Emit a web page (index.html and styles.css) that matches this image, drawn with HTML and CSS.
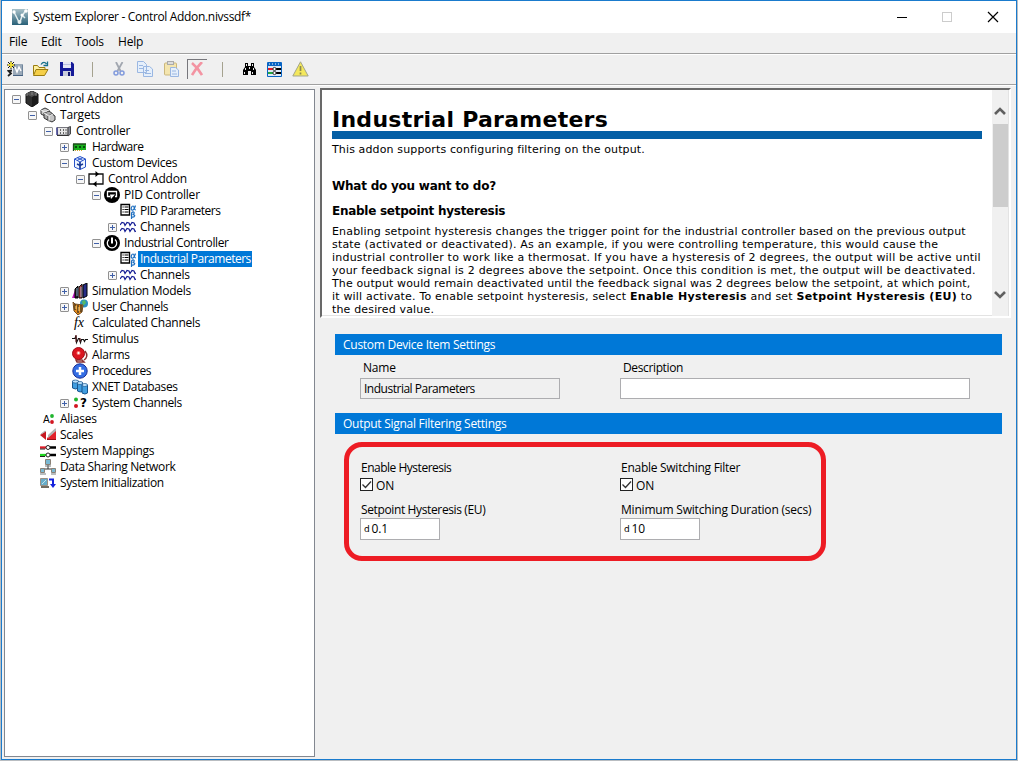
FILE: index.html
```html
<!DOCTYPE html>
<html lang="en">
<head>
<meta charset="utf-8">
<title>System Explorer - Control Addon.nivssdf*</title>
<link rel="stylesheet" href="styles.css">
</head>
<body>
<svg class="defs" width="0" height="0">
  <symbol id="params" viewBox="0 0 16 16"><path d="M1 1.500h8.500v10.500h-8.500z" fill="#fff" stroke="#000" stroke-width="1.300"/><path d="M2.500 4h1.200M4.500 4h4M2.500 6.500h1.200M4.500 6.500h4M2.500 9h1.200M4.500 9h4" stroke="#000"/><path d="M15.500 2.500C14 7 13 7.500 11.800 7C10.500 6 11.500 3 13 3C14.500 3 14 7 15.800 7M11.500 16V11C11.500 8 15 8.500 14 10.500C13.500 11.500 12.500 11.500 12.500 11.500C16 11.500 15 14.500 12 14" fill="none" stroke="#1e6fc0" stroke-width="1.200"/></symbol>
  <symbol id="waves" viewBox="0 0 16 16"><path d="M0 6L2 3.500L4 4L5 6.500L7 3.500L9 4L10 6.500L12 3.500L14 4L15 6.500L16 6M0 12L2 9.500L4 10L5 12.500L7 9.500L9 10L10 12.500L12 9.500L14 10L15 12.500L16 12" fill="none" stroke="#141c94" stroke-width="1.200"/></symbol>
</svg>
<div class="window">
  <header class="titlebar">
    <svg class="app" width="16" height="16"><defs><linearGradient id="ag" x2="0" y2="1"><stop stop-color="#a8c0c8"/><stop offset="1" stop-color="#286078"/></linearGradient></defs><rect width="16" height="16" fill="url(#ag)"/><path d="M2 3L7 13M8 13L10 7L14 1M10 6L13 9" stroke="#e4eef0" stroke-width="1.500" fill="none"/><circle cx="2" cy="3" r="1.700" fill="#fff"/><circle cx="7.500" cy="13" r="2" fill="#e8f0f0"/><circle cx="10" cy="6" r="1.500" fill="#fff"/><circle cx="14" cy="2" r="1.800" fill="#fff"/></svg>
    <span class="title">System Explorer - Control Addon.nivssdf*</span>
    <svg class="controls" width="102" height="12" shape-rendering="crispEdges"><path d="M0 6.500h10" stroke="#000"/><rect x="45.500" y="1.500" width="9" height="9" fill="none" stroke="#ccc"/><path d="M91 1l10 10M101 1L91 11" stroke="#000" stroke-width="1.200" shape-rendering="auto"/></svg>
  </header>
  <nav class="menu"><span class="m1">File</span><span class="m2">Edit</span><span class="m3">Tools</span><span class="m4">Help</span></nav>
  <div class="toolbar">
    <svg width="16" height="16"><rect x="6" y="3" width="10" height="11" fill="#9aa9b8"/><path d="M8 6l2 5 2-5 2 4" stroke="#fff" stroke-width="1.500" fill="none"/><path d="M6 14.500h10V4" fill="none" stroke="#456080"/><path d="M4 0v8M0 4h8M1 1l6 6M7 1L1 7" stroke="#111"/><path d="M4 1v6M1 4h6" stroke="#ffeb30" stroke-width="1.500"/><path d="M5 9.500L1.500 10L4 12.500L1 15" fill="none" stroke="#222" stroke-width="1.800"/></svg>
    <svg width="17" height="16"><path d="M1.500 13.500V4.500h4l1.500 2h6v3" fill="#fff1a0" stroke="#9a7c10"/><path d="M1.500 14.500L4 8.500h12L12.500 14.500z" fill="#f5cf48" stroke="#9a7c10"/><path d="M9 3.500C11 .5 13 1 14.500 3M15.500 .5v4h-4" fill="none" stroke="#17718c" stroke-width="1.300"/></svg>
    <svg width="14" height="14"><path d="M0 0h12l2 2v12H0z" fill="#151a98"/><path d="M3 0h8v6H3z" fill="#e6e8f4"/><path d="M3 2.500h8" stroke="#b9bfe0"/><path d="M3 9h8v5H3z" fill="#c8ccdc"/><path d="M8 10h2v4H8z" fill="#10146c"/></svg>
    <i class="sep"></i>
    <svg width="12" height="14"><path d="M3 0l4.500 9M9.500 0L4.500 9" stroke="#a2a7b0" stroke-width="1.800"/><circle cx="3" cy="11" r="2" fill="none" stroke="#829bdc" stroke-width="1.500"/><circle cx="9" cy="11" r="2" fill="none" stroke="#829bdc" stroke-width="1.500"/></svg>
    <svg width="17" height="16"><g fill="#e5effb" stroke="#9ab7e2"><path d="M.5 .5h6l3 3v8h-9zM6.500 5.500h6l3 2.500v7.500H6.500z"/><path d="M2 4.500h4M2 7.500h4M8 9.500h4M8 12.500h6"/></g></svg>
    <svg width="16" height="16"><rect x=".5" y="2" width="12" height="12" rx="1" fill="#f4e5ae" stroke="#cbb77c"/><rect x="3.500" y=".5" width="6" height="3" fill="#ddd" stroke="#aaa"/><path d="M6.500 6.500h5l3 2.500v6.500h-8z" fill="#e5effb" stroke="#9ab7e2"/><path d="M8 10h4M8 13h5" stroke="#9ab7e2"/></svg>
    <span class="pressed"><svg width="12" height="14"><path d="M1 1Q7 6 11 13M11 0Q5 6 1 13" fill="none" stroke="#f394a2" stroke-width="2.600"/></svg></span>
    <i class="sep"></i>
    <svg width="15" height="14"><path d="M3 1h3v3h3V1h3v4l2 3v5H9V9H6v4H1V8l2-3z" fill="#000"/><path d="M4.500 2v2M10.500 2v2M3.500 6v2M11.500 6v2M2.500 10v2M10.500 10v2M7.500 5v2" stroke="#e8e8e8"/></svg>
    <svg width="15" height="15"><rect width="15" height="15" rx="1" fill="#0864c4"/><path d="M1 4h13v10H1z" fill="#dfe9f5"/><path d="M2 2h1M5 2h1M8 2h1M11 2h1" stroke="#fff"/><path d="M1 7h5" stroke="#e21b28" stroke-width="2"/><path d="M9 7h5M9 11h5" stroke="#000" stroke-width="2"/><path d="M1 11h5" stroke="#26a940" stroke-width="2"/><circle cx="7.500" cy="7" r="1.600" fill="#fff" stroke="#333"/><circle cx="7.500" cy="11" r="1.600" fill="#fff" stroke="#333"/></svg>
    <svg width="17" height="16"><path d="M8.500 .8L16.200 15H.8z" fill="#f4e85c" stroke="#a3a58b" stroke-linejoin="round"/><path d="M8.500 5v5M8.500 11.500v2" stroke="#8c8a50" stroke-width="1.700"/></svg>
  </div>
  <main class="workspace">
    <div class="tree">
      <div class="row"><i class="ex minus"></i><svg width="16" height="16"><path d="M8 0l6 3v9l-6 4-6-4V3z" fill="#303030" stroke="#111"/><path d="M2 3l6 3 6-3-6-3z" fill="#555"/><path d="M8 6v10l6-4V3z" fill="#1c1c1c"/><path d="M3 2v3M8 1v3M12 2v3" stroke="#888"/></svg><span>Control Addon</span></div>
      <div class="row l1"><i class="ex minus"></i><svg width="16" height="16"><g stroke="#333" fill="#ccc"><path d="M1 3l4-2 4 2v4L5 9 1 7z"/><path d="M4 6l5-2 4 3v5l-4 2-5-3z" fill="#aaa"/><path d="M8 9l4-2 3 2v4l-3 2-4-2z" fill="#c4c4c4"/></g><path d="M1 3l4 2 4-2M4 6l5 3 4-2M9 9v5" stroke="#f2f2f2" fill="none"/></svg><span>Targets</span></div>
      <div class="row l2"><i class="ex minus"></i><svg width="16" height="16"><path d="M1 4.500h11v7.500H1.500z" fill="#e6e6e6" stroke="#77777f"/><path d="M12 4.500l2.500-1v7.500L12 13z" fill="#888a96" stroke="#444"/><path d="M1 4.500v7.500" stroke="#2b2e88" stroke-width="1.300"/><path d="M4.500 6v5M7.500 6v5M10 6v5" stroke="#666" stroke-dasharray="2 1"/><path d="M1 12.500h11" stroke="#333"/></svg><span>Controller</span></div>
      <div class="row l3"><i class="ex plus"></i><svg width="16" height="16"><path d="M1 5h13v6H2z" fill="#18b01c"/><path d="M1 5h13M1.500 5v7" stroke="#1d4c1b" stroke-width="1.300"/><path d="M3 7h2v2H3zM7 7h2v2H7zM11 7h2v2h-2z" fill="#064c0c"/><path d="M3 11.500h8" stroke="#d3a632" stroke-dasharray="1 1"/></svg><span class="k3">Hardware</span></div>
      <div class="row l3"><i class="ex minus"></i><svg width="16" height="16"><path d="M8 1.500l5.500 2.500v8L8 14.500l-5.500-2.500V4z" fill="#eef5ff" stroke="#2853c9"/><path d="M2.500 4L8 7l5.500-3M8 7v8M5 2.500l6 3M11 2.500L5 5.500" fill="none" stroke="#2853c9"/><path d="M8 7v7M5 9l3 1.500 3-1.500" fill="none" stroke="#173994" stroke-width="1.500"/></svg><span class="k1">Custom Devices</span></div>
      <div class="row l4"><i class="ex minus"></i><svg width="16" height="16"><path d="M1 3h14v10H1z" fill="#fff" stroke="#111" stroke-width="1.300"/><path d="M7.500 0L11 3 7.500 6zM8.500 10L5 13l3.500 3z"/></svg><span>Control Addon</span></div>
      <div class="row l5"><i class="ex minus"></i><svg width="16" height="16"><circle cx="8" cy="8" r="8"/><path d="M6 9.500H3.500v-5h9v5H11" fill="none" stroke="#fff" stroke-width="1.300"/><path d="M6 7.500h5L7 12z" fill="#fff"/></svg><span>PID Controller</span></div>
      <div class="row l6"><i class="ex"></i><svg width="16" height="16"><use href="#params"/></svg><span class="k3">PID Parameters</span></div>
      <div class="row l6"><i class="ex plus"></i><svg width="16" height="16"><use href="#waves"/></svg><span class="k1">Channels</span></div>
      <div class="row l5"><i class="ex minus"></i><svg width="16" height="16"><circle cx="8" cy="8" r="8"/><path d="M5 4.500A4.700 4.700 0 1 0 11 4.500" fill="none" stroke="#fff" stroke-width="1.300"/><path d="M8 2.500v6" stroke="#fff" stroke-width="2"/></svg><span class="k2">Industrial Controller</span></div>
      <div class="row l6"><i class="ex"></i><svg width="16" height="16"><use href="#params"/></svg><span class="selected k3">Industrial Parameters</span></div>
      <div class="row l6"><i class="ex plus"></i><svg width="16" height="16"><use href="#waves"/></svg><span class="k1">Channels</span></div>
      <div class="row l3"><i class="ex plus"></i><svg width="16" height="16"><path d="M0 15L3 7v8z" fill="#c318c5"/><path d="M3 6l3-3v12H3z" fill="#202328" stroke="#000"/><path d="M7 4l3-3v14H7z" fill="#c53e38" stroke="#111"/><path d="M11 2l4-2v13l-4 2z" fill="#262d87" stroke="#000"/><path d="M9 4v10M5 5v8" stroke="#84a4c8"/></svg><span class="k1">Simulation Models</span></div>
      <div class="row l3"><i class="ex plus"></i><svg width="16" height="16"><circle cx="12" cy="4.500" r="4" fill="#2a8fc2"/><path d="M10 2l3-1 1 3-3 3z" fill="#55b866"/><path d="M1 3l2 2 8 1-1 7-4 3-4-4z" fill="#e58b1c" stroke="#704c24"/><path d="M3 5v6M6 6v8M9 6v7" stroke="#39301f" stroke-width="1.300"/><path d="M4 7v3M7 8v4" stroke="#ffd276"/></svg><span class="k2">User Channels</span></div>
      <div class="row l3"><i class="ex"></i><svg width="16" height="16"><text x="2" y="12" class="fx">fx</text></svg><span class="k1">Calculated Channels</span></div>
      <div class="row l3"><i class="ex"></i><svg width="16" height="16"><path d="M0 7.500h3l1-3 .5 7 2-4 1 0 1 4 1-3h2l1 2 1-2h2.500" fill="none" stroke="#111" stroke-width="1.200"/><path d="M4 4v7M8 7v4" stroke="#702024"/></svg><span>Stimulus</span></div>
      <div class="row l3"><i class="ex"></i><svg width="16" height="16"><path d="M13 4c3 4 2 7-1 9M4 13h6l2 2H5z" fill="none" stroke="#8b3232" stroke-width="1.500"/><circle cx="6.500" cy="6.500" r="6" fill="#db1520" stroke="#a00b15"/><circle cx="6.500" cy="6" r="2" fill="#ff7c75"/><circle cx="6.500" cy="6" r="1" fill="#fff"/></svg><span>Alarms</span></div>
      <div class="row l3"><i class="ex"></i><svg width="16" height="16"><circle cx="8" cy="8" r="7.200" fill="#346ee3" stroke="#182d95"/><path d="M8 4v8M4 8h8" stroke="#fff" stroke-width="2.500"/></svg><span class="k3">Procedures</span></div>
      <div class="row l3"><i class="ex"></i><svg width="16" height="16"><g fill="#419ee0" stroke="#17558e"><path d="M.5 2v7q3 2 6 0V2z"/><path d="M5.500 4v8q3 2 5 0V4z"/><path d="M10 6v8q3 2 5.500 0V6z"/></g><g fill="#bfe4ff" stroke="#17558e" stroke-width=".7"><ellipse cx="3.500" cy="2.500" rx="3" ry="1.500"/><ellipse cx="8" cy="4" rx="2.800" ry="1.500"/><ellipse cx="12.800" cy="6" rx="2.700" ry="1.500"/></g></svg><span class="k2">XNET Databases</span></div>
      <div class="row l3"><i class="ex plus"></i><svg width="16" height="16"><circle cx="4" cy="4.500" r="2" fill="#20b52e"/><circle cx="4" cy="11" r="2" fill="#d21520"/><text x="8" y="12" class="q">?</text></svg><span class="k2">System Channels</span></div>
      <div class="row l1"><i class="ex"></i><svg width="16" height="16"><text x="3" y="12" class="a">A</text><circle cx="12" cy="5" r="1.900" fill="#20b52e"/><circle cx="12" cy="11" r="1.900" fill="#d21520"/></svg><span class="k1">Aliases</span></div>
      <div class="row l1"><i class="ex"></i><svg width="16" height="16"><path d="M0 8l6-4v9z" fill="#c71920"/><path d="M7 11l9-8v10H7z" fill="#e3222b"/><path d="M1 6.500l4-3 1 1-5 3zM8 8l7-6.500h1V4l-8 7z" fill="#b4b4b4"/><path d="M7 12.500h9" stroke="#9d0c14"/></svg><span class="k1">Scales</span></div>
      <div class="row l1"><i class="ex"></i><svg width="16" height="16"><path d="M0 4.500h6" stroke="#e01b27" stroke-width="2.300"/><path d="M0 12h6" stroke="#20d620" stroke-width="2.300"/><path d="M10 4.500h6M10 12h6" stroke="#000" stroke-width="2.300"/><path d="M0 6h5M0 13.500h5" stroke="#222"/><circle cx="8" cy="4.500" r="2" fill="#fff" stroke="#222"/><circle cx="8" cy="12" r="2" fill="#fff" stroke="#222"/></svg><span class="k1">System Mappings</span></div>
      <div class="row l1"><i class="ex"></i><svg width="16" height="16"><path d="M8 6v4H3v2M8 10h5v2" fill="none" stroke="#333"/><g fill="#79b9d4" stroke="#8a8176"><path d="M5.500 .5h5v5h-5zM.5 9.500h4v4h-4zM11.500 9.500h4v4h-4z"/></g><path d="M5 7h6M0 15h6M11 15h5" stroke="#747c80"/></svg><span class="k2">Data Sharing Network</span></div>
      <div class="row l1"><i class="ex"></i><svg width="16" height="16"><path d="M.5 3.500h7v7h-7z" fill="#67acc9" stroke="#9b9185"/><path d="M2 9l4-4" stroke="#c4e4ec"/><path d="M1 12h8" stroke="#726b60" stroke-width="2"/><path d="M9 4.500h4v6" fill="none" stroke="#1522dd" stroke-width="2"/><path d="M10 9h6l-3 4z" fill="#1522dd"/></svg><span class="k2">System Initialization</span></div>
    </div>
    <section class="content">
      <div class="help">
        <div class="doc">
          <h1>Industrial Parameters</h1>
          <p class="intro">This addon supports configuring filtering on the output.</p>
          <h2>What do you want to do?</h2>
          <h3>Enable setpoint hysteresis</h3>
          <p class="body">
            <span class="w2">Enabling setpoint hysteresis changes the trigger point for the industrial controller based on the previous output</span>
            <span class="w3">state (activated or deactivated). As an example, if you were controlling temperature, this would cause the</span>
            <span class="w4">industrial controller to work like a thermosat. If you have a hysteresis of 2 degrees, the output will be active until</span>
            <span class="w4">your feedback signal is 2 degrees above the setpoint. Once this condition is met, the output will be deactivated.</span>
            <span class="w1">The output would remain deactivated until the feedback signal was 2 degrees below the setpoint, at which point,</span>
            <span class="w3">it will activate. To enable setpoint hysteresis, select <b>Enable Hysteresis</b> and set <b>Setpoint Hysteresis (EU)</b> to</span>
            <span class="w2">the desired value.</span>
          </p>
        </div>
        <div class="scroll"><svg width="16" height="34"><path d="M3 24l5-5 5 5" fill="none" stroke="#606060" stroke-width="2.600"/></svg><i class="thumb"></i><svg class="down" width="16" height="34"><path d="M3 10l5 5 5-5" fill="none" stroke="#606060" stroke-width="2.600"/></svg></div>
      </div>
      <div class="bar">Custom Device Item Settings</div>
      <div class="fields">
        <label><span>Name</span><div class="input disabled k3">Industrial Parameters</div></label>
        <label><span class="k2">Description</span><div class="input wide"></div></label>
      </div>
      <div class="bar">Output Signal Filtering Settings</div>
      <div class="callout">
        <div class="group">
          <div class="lab k3">Enable Hysteresis</div>
          <div class="check"><svg width="13" height="13"><rect x=".5" y=".5" width="12" height="12" fill="#fff" stroke="#222"/><path d="M2.500 6.500l3 3 5.500-6" fill="none" stroke="#333" stroke-width="1.300"/></svg><span>ON</span></div>
          <div class="lab k2">Setpoint Hysteresis (EU)</div>
          <div class="num"><small>d</small><span>0.1</span></div>
        </div>
        <div class="group">
          <div class="lab k1">Enable Switching Filter</div>
          <div class="check"><svg width="13" height="13"><rect x=".5" y=".5" width="12" height="12" fill="#fff" stroke="#222"/><path d="M2.500 6.500l3 3 5.500-6" fill="none" stroke="#333" stroke-width="1.300"/></svg><span>ON</span></div>
          <div class="lab">Minimum Switching Duration (secs)</div>
          <div class="num"><small>d</small><span>10</span></div>
        </div>
      </div>
    </section>
  </main>
</div>
</body>
</html>
```
FILE: styles.css
```css
* { box-sizing: border-box; }
body { margin: 0; width: 1018px; height: 761px; overflow: hidden; background: #b9bdc1; font: 12px/16px "Open Sans", sans-serif; letter-spacing: -0.2px; color: #000; white-space: nowrap; }
svg { flex: none; display: block; }
.defs { position: absolute; }
.k1 { letter-spacing: -0.27px; }
.k2 { letter-spacing: -0.37px; }
.k3 { letter-spacing: -0.49px; }
.window { width: 1016px; height: 760px; margin-left: 1px; border: 1px solid #1a7bcd; background: #f0f0f0; display: flex; flex-direction: column; }
.titlebar { height: 32px; flex: none; background: #fff; display: flex; align-items: center; padding: 0 17px 0 10px; }
.title { margin-left: 5px; flex: 1; letter-spacing: -0.33px; }
.menu { height: 22px; flex: none; display: flex; padding: 1px 0 0 7px; border-bottom: 1px solid #fff; box-shadow: inset 0 -1px #a0a0a0; }
.m1 { width: 32px; } .m2 { width: 34px; } .m3 { width: 43px; }
.toolbar { height: 31px; flex: none; display: flex; align-items: center; padding: 0 0 2px 5px; border-bottom: 1px solid #fff; box-shadow: inset 0 -1px #a0a0a0; }
.toolbar > svg:nth-child(2) { margin-left: 9px; }
.toolbar > svg:nth-child(3) { margin-left: 11px; }
.sep { width: 1px; height: 15px; background: #a5a28f; margin-left: 18px; }
.toolbar > svg:nth-child(5) { margin-left: 20px; }
.toolbar > svg:nth-child(6) { margin-left: 12px; }
.toolbar > svg:nth-child(7) { margin-left: 10px; }
.pressed { width: 20px; height: 20px; margin-left: 7px; padding: 2px 0 0 3px; border: solid #77777c; border-width: 1px 0 0 1px; }
.pressed + .sep { margin-left: 15px; }
.toolbar > svg:nth-child(10) { margin-left: 19px; }
.toolbar > svg:nth-child(11) { margin-left: 10px; }
.toolbar > svg:nth-child(12) { margin-left: 10px; }
.workspace { flex: 1; display: flex; padding: 2px 0 0 2px; }
.tree { width: 311px; height: 668px; margin-top: 1px; padding: 1px 0 0 7px; background: #fff; border: 1px solid #828790; }
.row { height: 16px; display: flex; align-items: center; }
.row > span { padding: 0 1px 0 2px; margin-left: 2px; line-height: 16px; }
.row > svg { margin-left: 3px; }
.l1 { padding-left: 16px; } .l2 { padding-left: 32px; } .l3 { padding-left: 48px; }
.l4 { padding-left: 64px; } .l5 { padding-left: 80px; } .l6 { padding-left: 96px; }
.ex { width: 9px; height: 9px; flex: none; }
.plus, .minus { border: 1px solid #919191; border-radius: 1px; background: linear-gradient(#4060a8, #4060a8) center / 5px 1px no-repeat, #f6f6f6; }
.plus { background: linear-gradient(#4060a8, #4060a8) center / 5px 1px no-repeat, linear-gradient(#4060a8, #4060a8) center / 1px 5px no-repeat, #f6f6f6; }
.row > .selected { background: #0078d7; color: #fff; }
.fx { font: italic 14px "Liberation Serif", serif; }
.q { font: bold 12px "DejaVu Sans", sans-serif; }
.a { font: 10px "DejaVu Sans", sans-serif; }
.content { width: 691px; margin-left: 5px; }
.help { height: 230px; display: flex; background: #fff; border: 2px solid; border-color: #696969 #fff #fff #696969; box-shadow: inset -1px -1px #e3e3e3; overflow: hidden; }
.doc { width: 670px; height: 226px; padding: 16px 10px 0; overflow: hidden; font: 11px/13px "DejaVu Sans", sans-serif; letter-spacing: 0; }
.doc p, .doc h1, .doc h2, .doc h3 { margin: 0; }
.doc h1 { height: 33px; font-size: 22px; line-height: 27px; letter-spacing: 0.26px; border-bottom: 8px solid #055fa5; }
.doc .intro { margin-top: 4px; letter-spacing: 0.13px; }
.doc h2, .doc h3 { font-size: 12px; line-height: 15px; letter-spacing: -0.23px; }
.doc h2 { margin-top: 23px; }
.doc h3 { margin-top: 10px; letter-spacing: -0.27px; }
.doc .body { margin-top: 6px; }
.body > span { display: block; }
.w1 { letter-spacing: 0.125px; }
.w2 { letter-spacing: 0.16px; }
.w3 { letter-spacing: 0.19px; }
.w4 { letter-spacing: 0.215px; }
.body b { letter-spacing: 0.34px; }
.scroll { width: 16px; background: #f0f0f0; display: flex; flex-direction: column; }
.thumb { width: 15px; height: 83px; margin-left: 1px; background: #cdcdcd; }
.down { margin-top: auto; }
.bar { width: 667px; height: 21px; margin: 16px 0 0 15px; padding: 3px 8px; letter-spacing: -0.27px; background: #0078d7; color: #fff; }
.fields { height: 58px; padding: 5px 0 0 40px; display: grid; grid-template-columns: 260px 350px; }
.fields + .bar { margin-top: 0; }
.fields label > span { display: block; margin-left: 3px; height: 18px; }
.input { width: 200px; height: 21px; padding: 2px 3px; border: 1px solid #adadb0; background: #fff; }
.disabled { background: #f0f0f0; }
.wide { width: 350px; }
.callout { width: 482px; height: 119px; margin: 8px 0 0 24px; padding: 13px 0 0 11px; border: 5px solid #ed1c24; border-radius: 18px; display: grid; grid-template-columns: 260px 1fr; }
.lab { padding-left: 1px; height: 18px; }
.check { height: 24px; display: flex; align-items: flex-start; }
.check span { margin: 0 0 0 3px; }
.num { width: 80px; height: 22px; margin-top: -2px; padding: 2px 3px; border: 1px solid #adadb0; background: #fff; display: flex; gap: 2px; }
.num small { font: 9px/16px "DejaVu Sans", sans-serif; }
```
